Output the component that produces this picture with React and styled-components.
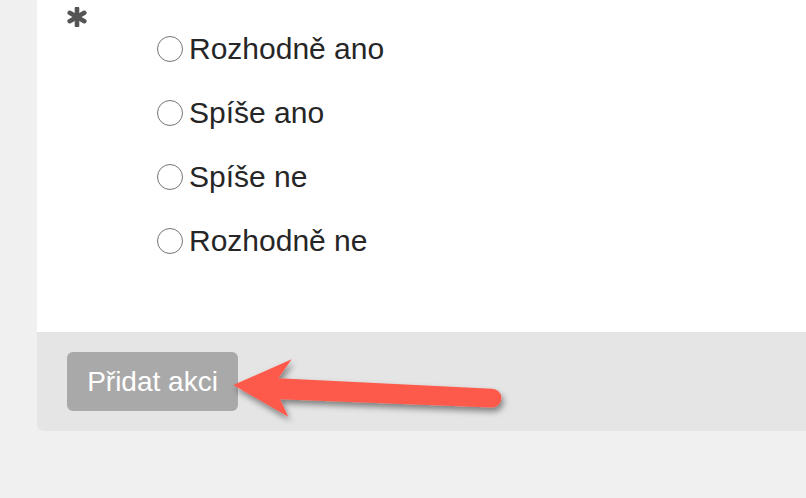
import React from "react";
import styled, { createGlobalStyle } from "styled-components";

const Global = createGlobalStyle`
  html, body { margin: 0; padding: 0; background: #f0f0f0; }
  body { font-family: "Liberation Sans", Arial, Helvetica, sans-serif; overflow: hidden; }
`;

const Page = styled.div`
  width: 806px;
  height: 498px;
  padding-left: 37px;
  box-sizing: border-box;
  overflow: hidden;
`;

const Card = styled.div`
  width: 800px;
  background: #ffffff;
  border-bottom-left-radius: 6px;
  overflow: hidden;
`;

const Body = styled.div`
  height: 332px;
  box-sizing: border-box;
  padding: 7px 0 0 30px;
  display: flex;
  align-items: flex-start;
`;

const Required = styled.svg`
  width: 20px;
  height: 20px;
  flex: none;
  display: block;
`;

const Options = styled.div`
  margin-left: 70px;
  padding-top: 10px;
  display: flex;
  flex-direction: column;
`;

const Option = styled.label`
  height: 64px;
  display: flex;
  align-items: center;
  gap: 6px;
  font-size: 30px;
  color: #262626;
  cursor: pointer;
`;

const Radio = styled.input`
  appearance: none;
  -webkit-appearance: none;
  margin: 0;
  width: 26px;
  height: 26px;
  border: 1.8px solid #747474;
  border-radius: 50%;
  background: #ffffff;
  box-sizing: border-box;
  flex: none;
`;

const Footer = styled.div`
  position: relative;
  height: 99px;
  box-sizing: border-box;
  background: #e5e5e5;
  padding: 20px 30px;
  display: flex;
  align-items: flex-start;
`;

const Button = styled.button`
  width: 171px;
  height: 59px;
  border: none;
  border-radius: 6px;
  background: #a9a9a9;
  color: #ffffff;
  font-family: "Liberation Sans", Arial, sans-serif;
  font-size: 28px;
  padding: 0;
  cursor: pointer;
`;

const Arrow = styled.svg`
  position: absolute;
  left: 188px;
  top: 18px;
  width: 300px;
  height: 90px;
  overflow: visible;
  pointer-events: none;
`;

const options = ["Rozhodně ano", "Spíše ano", "Spíše ne", "Rozhodně ne"];

export default function App() {
  return (
    <>
      <Global />
      <Page>
        <Card>
          <Body>
            <Required viewBox="0 0 20 20">
              <g stroke="#555555" strokeWidth="4.6" strokeLinecap="round">
                <line x1="10" y1="1.6" x2="10" y2="18.4" />
                <line x1="2.7" y1="5.8" x2="17.3" y2="14.2" />
                <line x1="2.7" y1="14.2" x2="17.3" y2="5.8" />
              </g>
            </Required>
            <Options>
              {options.map((o) => (
                <Option key={o}>
                  <Radio type="radio" name="q" />
                  {o}
                </Option>
              ))}
            </Options>
          </Body>
          <Footer>
            <Button>Přidat akci</Button>
            <Arrow viewBox="0 0 300 90">
              <defs>
                <filter id="sh" x="-20%" y="-40%" width="140%" height="200%">
                  <feDropShadow dx="2" dy="4" stdDeviation="3" floodColor="#000" floodOpacity="0.45" />
                </filter>
              </defs>
              <path
                d="M8.3 35 L66.7 9.3 L53.3 28.3 L267 38.8 A9.4 9.4 0 0 1 267 57.6 L55 49.3 L63.3 66.7 Z"
                fill="#fd5a4b"
                filter="url(#sh)"
              />
            </Arrow>
          </Footer>
        </Card>
      </Page>
    </>
  );
}
